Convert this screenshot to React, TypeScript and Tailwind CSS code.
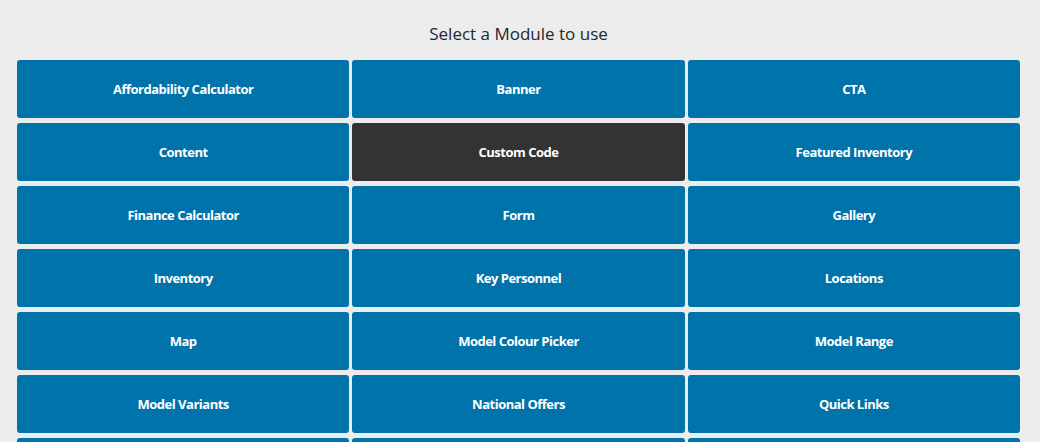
const modules = [
  "Affordability Calculator",
  "Banner",
  "CTA",
  "Content",
  "Custom Code",
  "Featured Inventory",
  "Finance Calculator",
  "Form",
  "Gallery",
  "Inventory",
  "Key Personnel",
  "Locations",
  "Map",
  "Model Colour Picker",
  "Model Range",
  "Model Variants",
  "National Offers",
  "Quick Links",
  "Reviews",
  "Slider",
  "Video",
];

const active = "Custom Code";

export default function App() {
  return (
    <div className="h-[442px] overflow-hidden bg-[#ececec] pl-[17px] pr-[20px] font-['Open_Sans',sans-serif]">
      <h2 className="pt-[22px] pb-[14px] text-center text-[17px] leading-[24px] text-[#23282d]">
        Select a Module to use
      </h2>
      <div className="grid grid-cols-3 gap-x-[3px] gap-y-[5px]">
        {modules.map((name) => (
          <button
            key={name}
            className={
              name === active
                ? "flex h-[58px] items-center justify-center rounded-[3px] bg-[#333333] pt-[2px] text-[13px] font-bold tracking-[-0.5px] text-white"
                : "flex h-[58px] items-center justify-center rounded-[3px] bg-[#0073aa] pt-[2px] text-[13px] font-bold tracking-[-0.5px] text-white"
            }
          >
            {name}
          </button>
        ))}
      </div>
    </div>
  );
}
